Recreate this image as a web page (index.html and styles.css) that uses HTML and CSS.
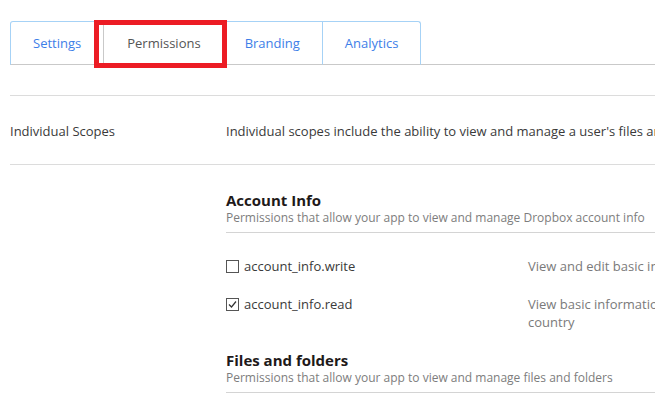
FILE: index.html
```html
<!DOCTYPE html>
<html lang="en">
<head>
    <meta charset="UTF-8">
    <meta name="viewport" content="width=device-width, initial-scale=1.0">
    <title>App Console - Permissions</title>
    <link rel="stylesheet" href="styles.css">
</head>
<body>
<div class="page">
    <ul class="tabs">
        <li class="tab">Settings</li>
        <li class="tab active">Permissions</li>
        <li class="tab">Branding</li>
        <li class="tab">Analytics</li>
    </ul>

    <div class="scope-row">
        <div class="scope-label">Individual Scopes</div>
        <div class="scope-text">Individual scopes include the ability to view and manage a user's files and folders, account info and more.</div>
    </div>

    <div class="groups">
        <div class="group">
            <h3 class="group-title">Account Info</h3>
            <p class="group-sub">Permissions that allow your app to view and manage Dropbox account info</p>
            <div class="perm">
                <label class="perm-name"><span class="box"></span>account_info.write</label>
                <div class="perm-desc">View and edit basic information about your Dropbox account</div>
            </div>
            <div class="perm">
                <label class="perm-name"><span class="box checked">
                    <svg width="11" height="11" viewBox="0 0 11 11"><path d="M2 5.5 L4.5 8 L9 2.5" fill="none" stroke="#333" stroke-width="1.2"/></svg>
                </span>account_info.read</label>
                <div class="perm-desc">View basic information about your Dropbox account such as your username, email, and country</div>
            </div>
        </div>

        <div class="group">
            <h3 class="group-title">Files and folders</h3>
            <p class="group-sub">Permissions that allow your app to view and manage files and folders</p>
        </div>
    </div>
</div>
</body>
</html>
```

FILE: styles.css
```css
* {
    box-sizing: border-box;
    margin: 0;
    padding: 0;
}

html, body {
    overflow: hidden;
}

body {
    font-family: 'Open Sans', sans-serif;
    font-size: 13px;
    line-height: 18px;
    color: #3a3a3a;
    background: #fff;
}

.page {
    width: 1200px;
    padding: 21px 0 0 10px;
}

.tabs {
    display: flex;
    list-style: none;
    border-bottom: 1px solid #c9c9c9;
}

.tab {
    padding: 12px 22px;
    margin-bottom: -1px;
    margin-left: -1px;
    border: 1px solid #a6d2f6;
    border-bottom-color: #c9c9c9;
    color: #3d7ee8;
    position: relative;
}

.tab:first-child {
    margin-left: 0;
    border-top-left-radius: 3px;
}

.tab:last-child {
    border-top-right-radius: 3px;
}

.tab.active {
    color: #555;
    border-color: #c9c9c9;
    border-bottom-color: #fff;
    z-index: 1;
    padding: 12px 21px 12px 23px;
}

/* highlight box drawn over the active tab */
.tab.active::after {
    content: '';
    position: absolute;
    left: -10px;
    right: -5px;
    top: -2px;
    bottom: -4px;
    border: 5px solid #ec1c24;
}

.scope-row {
    display: flex;
    margin-top: 30px;
    padding: 26px 0 24px;
    border-top: 1px solid #dcdcdc;
    border-bottom: 1px solid #dcdcdc;
    white-space: nowrap;
}

.scope-label {
    width: 216px;
}

.groups {
    padding-left: 216px;
}

.group {
    padding-top: 25px;
}

.group + .group {
    padding-top: 19px;
}

.group-title {
    font-size: 15px;
    line-height: 20px;
    font-weight: 700;
    color: #1e1919;
}

.group-sub {
    font-size: 12px;
    line-height: 16px;
    color: #7d7d7d;
    padding-bottom: 6px;
    border-bottom: 1px solid #d4d4d4;
}

.perm {
    display: flex;
    margin-top: 20px;
}

.group-sub + .perm {
    margin-top: 24px;
}

.perm-name {
    width: 302px;
    display: flex;
    align-items: center;
    align-self: flex-start;
    height: 18px;
}

.box {
    width: 13px;
    height: 13px;
    border: 1px solid #555;
    margin-right: 5px;
    display: flex;
    align-items: center;
    justify-content: center;
}

.perm-desc {
    width: 560px;
    color: #7a7a7a;
}
```
